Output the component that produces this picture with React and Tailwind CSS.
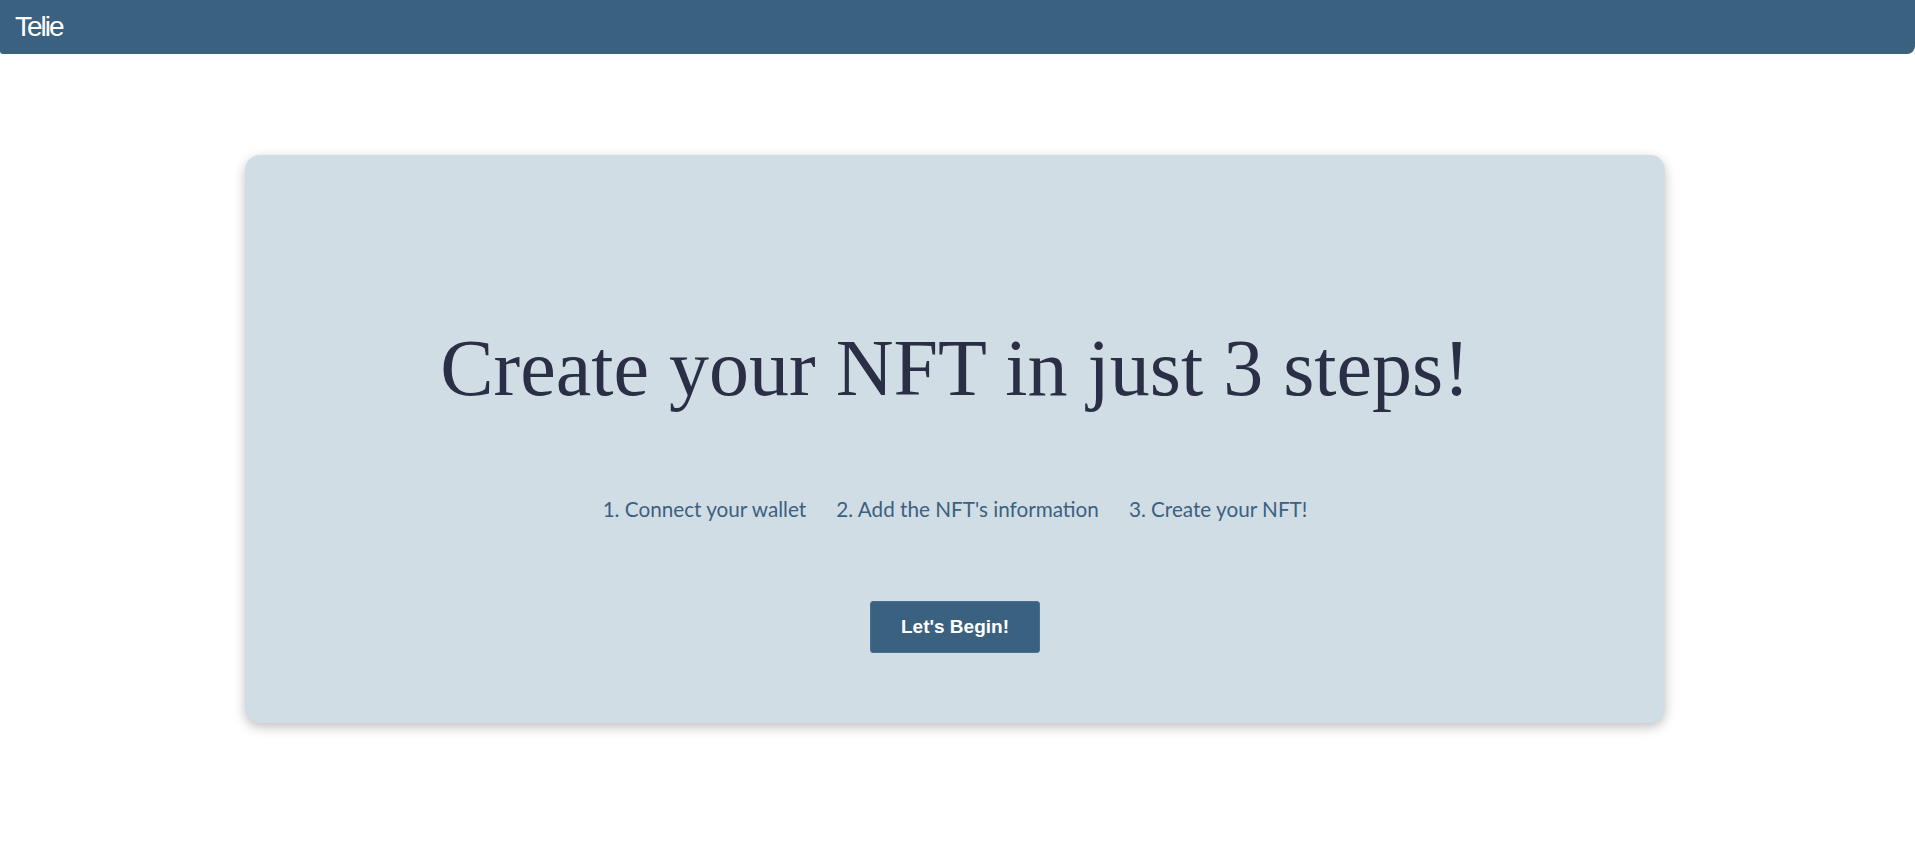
export default function App() {
  return (
    <div className="min-h-[841px] w-full bg-white">
      <header className="h-[54px] w-full bg-[#3b6180] rounded-br-lg rounded-bl-[3px] flex items-center px-[15px]">
        <span
          className="text-white text-[28px] leading-none tracking-[-2px]"
          style={{ fontFamily: '"Liberation Sans", Arial, sans-serif' }}
        >
          Telie
        </span>
      </header>
      <main className="pt-[101px] flex">
        <div className="ml-[245px] w-[1420px] bg-[#d1dde5] rounded-[15px] shadow-[0_4px_12px_rgba(0,0,0,0.25)] flex flex-col items-center pt-[167px] pb-[70px]">
          <h1
            className="text-[80px] leading-[92px] text-[#2a2f45]"
            style={{ fontFamily: '"Liberation Serif", "Times New Roman", serif' }}
          >
            Create your NFT in just 3 steps!
          </h1>
          <div
            className="mt-[83px] flex gap-[30px] text-[20.7px] leading-[25px] text-[#3b6180]"
            style={{ fontFamily: 'Lato, "Noto Sans", sans-serif' }}
          >
            <span>1. Connect your wallet</span>
            <span>2. Add the NFT's information</span>
            <span>3. Create your NFT!</span>
          </div>
          <button
            className="mt-[79px] w-[170px] h-[52px] bg-[#3b6180] border border-[#4a7090] rounded-[3px] text-white font-bold text-[19px]"
            style={{ fontFamily: '"Liberation Sans", Arial, sans-serif' }}
          >
            Let's Begin!
          </button>
        </div>
      </main>
    </div>
  );
}
